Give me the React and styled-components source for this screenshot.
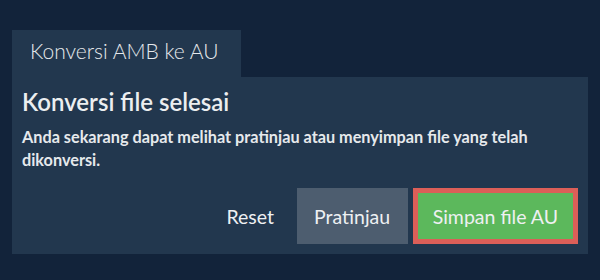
import styled, { createGlobalStyle } from "styled-components";

const GlobalStyle = createGlobalStyle`
  html, body {
    margin: 0;
    padding: 0;
    background: #12233a;
  }
  body {
    font-family: Lato, "Open Sans", sans-serif;
    color: #e8ebee;
  }
`

const Page = styled.div`
  width: 600px;
  height: 280px;
  box-sizing: border-box;
  padding: 30px 12px 0 12px;
  display: flex;
  flex-direction: column;
`

const Tab = styled.div`
  align-self: flex-start;
  width: 229px;
  height: 47px;
  box-sizing: border-box;
  padding: 8px 0 0 18px;
  background: #22374e;
  font-size: 21px;
  font-weight: 300;
  color: #e6e9ec;
`

const Panel = styled.div`
  height: 177px;
  box-sizing: border-box;
  background: #22374e;
  padding: 9px 10px 10px 10px;
  display: flex;
  flex-direction: column;
`

const Heading = styled.h2`
  margin: 0;
  font-size: 24px;
  font-weight: 600;
  line-height: 32px;
  color: #eceef0;
`

const Text = styled.p`
  margin: 7px 0 0 0;
  font-size: 16.25px;
  font-weight: 700;
  line-height: 23px;
  color: #e6e9ec;
`

const Actions = styled.div`
  margin-top: auto;
  display: flex;
  justify-content: flex-end;
  align-items: center;
  gap: 5px;
`

const Button = styled.button`
  font-family: inherit;
  font-size: 19.5px;
  font-weight: 400;
  color: #eef0f2;
  border: ${(p) => (p.$focus ? "5px solid #dc5f58" : "none")};
  background: ${(p) =>
    p.$variant === "primary" ? "#5cb85c" : p.$variant === "plain" ? "transparent" : "#4d5d6f"};
  height: 56px;
  box-sizing: border-box;
  padding: 0 ${(p) => (p.$focus ? "15px" : "17.5px")};
  cursor: pointer;
`

export default function App() {
  return (
    <Page>
      <GlobalStyle />
      <Tab>Konversi AMB ke AU</Tab>
      <Panel>
        <Heading>Konversi file selesai</Heading>
        <Text>
          Anda sekarang dapat melihat pratinjau atau menyimpan file yang telah dikonversi.
        </Text>
        <Actions>
          <Button $variant="plain">Reset</Button>
          <Button>Pratinjau</Button>
          <Button $variant="primary" $focus>
            Simpan file AU
          </Button>
        </Actions>
      </Panel>
    </Page>
  );
}
